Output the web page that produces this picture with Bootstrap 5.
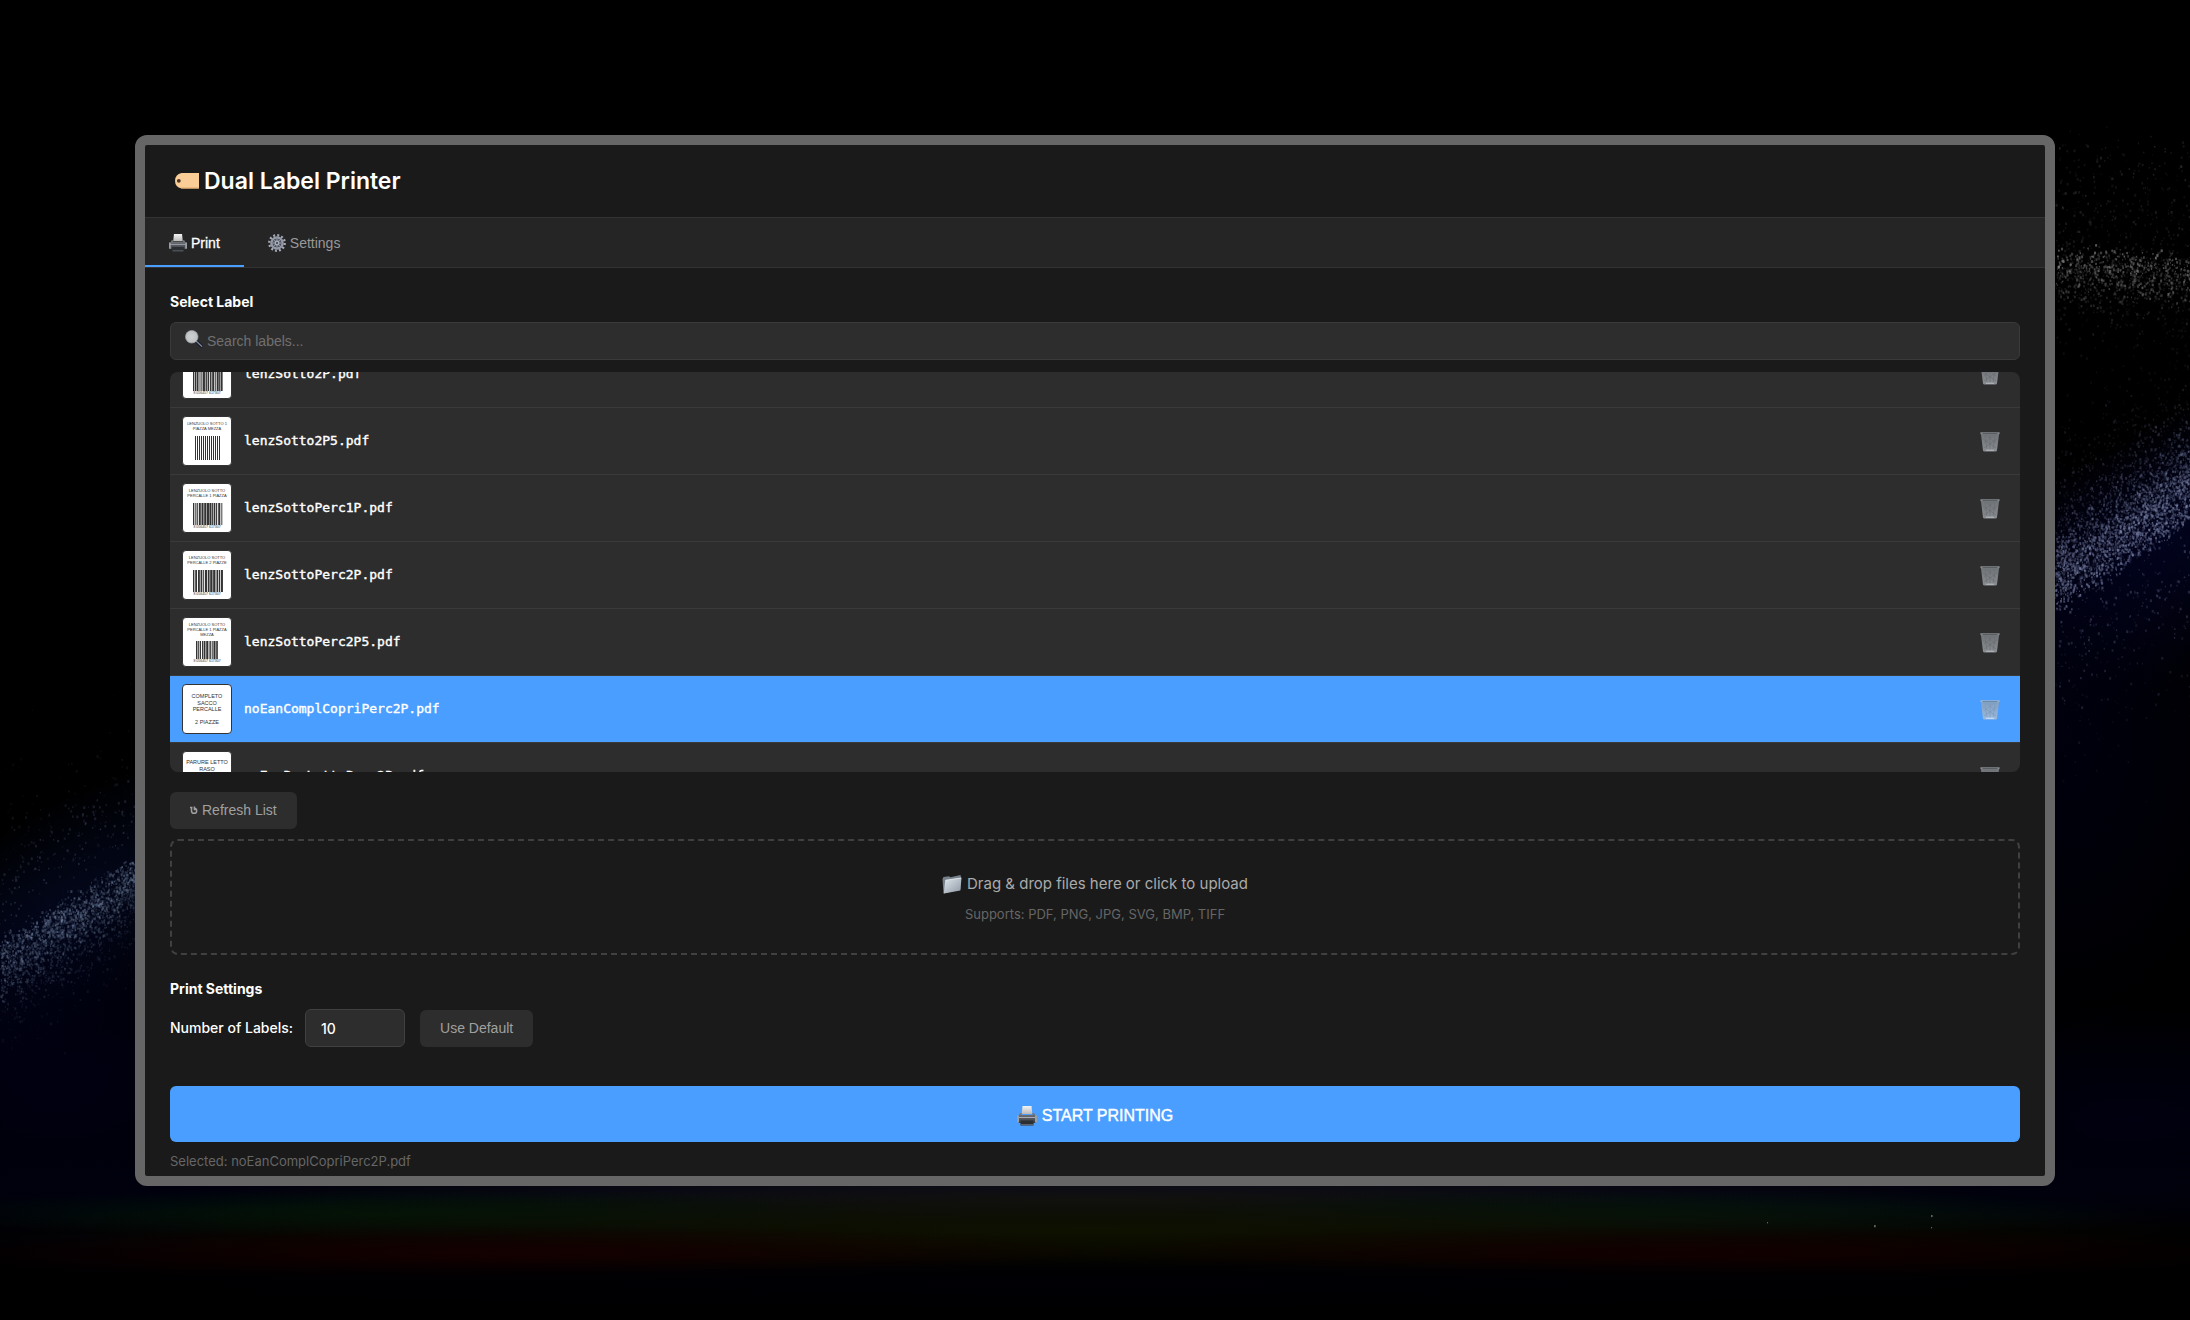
<!DOCTYPE html>
<html lang="en" data-bs-theme="dark">
<head>
<meta charset="utf-8">
<meta name="viewport" content="width=device-width, initial-scale=1">
<title>Dual Label Printer</title>
<link rel="stylesheet" href="https://cdn.jsdelivr.net/npm/bootstrap@5.3.0/dist/css/bootstrap.min.css">
<style>
  body { background: #000; font-family: Inter, "Open Sans", sans-serif; font-size: 14px; line-height: 20px; color: #fff; }
  .sky { position: fixed; inset: 0; width: 100%; height: 100%; z-index: -1; }
  .desktop { padding: 135px; }
  .app-window { border: 10px solid #666; border-radius: 12px; background: #1a1a1a; overflow: hidden; }
  .app-header { padding: 20px 30px; border-bottom: 1px solid #333; gap: 5px; }
  .app-header h1 { font-size: 23px; line-height: 32px; font-weight: 600; margin: 0; }
  .btn-soft, .btn-print, .tab-btn, .search-box input { font-family: "Liberation Sans", Arial, sans-serif; font-size: 14px; }
  .tab-strip { background: #252525; border-bottom: 1px solid #333; }
  .tab-btn { height: 49px; padding: 2px 24px 0; border: 0; border-bottom: 2px solid transparent; border-radius: 0; background: none; color: #999; gap: 4px; }
  .tab-btn.active { color: #fff; border-bottom-color: #4a9eff; -webkit-text-stroke: 0.3px #fff; }
  .app-body { padding: 24px 25px 6px; }
  .section-title { font-size: 14px; line-height: 20px; font-weight: 700; margin: 0 0 10px; }
  .search-box { height: 38px; padding: 0 14px; gap: 4px; background: #2d2d2d; border: 1px solid #3a3a3a; border-radius: 6px; margin-bottom: 12px; }
  .search-box input { background: none; border: 0; padding: 0; box-shadow: none !important; color: #fff; }
  .search-box input::placeholder { color: #707070; }
  .file-list { height: 400px; overflow-y: auto; scrollbar-width: none; background: #2d2d2d; border-radius: 8px; margin-bottom: 20px; }
  .file-list::-webkit-scrollbar { display: none; }
  .file-row { padding: 8px 12px; gap: 12px; border-bottom: 1px solid #3a3a3a; cursor: pointer; }
  .file-row.selected { background: #4a9eff; border-bottom-color: #3a3a3a; background-clip: padding-box; }
  .file-name { font-family: "DejaVu Sans Mono", monospace; font-size: 13px; -webkit-text-stroke: 0.4px #fff; }
  .thumb { width: 50px; height: 50px; border: 1px solid #333; border-radius: 4px; background: #fff; flex: none; }
  .row-del { width: 36px; height: 36px; padding: 0; border: 0; background: none; opacity: .9; }
  .selected .row-del { opacity: .7; filter: brightness(1.3); }
  .btn-soft { background: #2d2d2d; color: #a0a0a0; border: 0; border-radius: 6px; height: 37px; padding: 0 20px; gap: 4px; }
  .drop-zone { border: 2px dashed #404040; border-radius: 8px; padding: 30px; margin: 10px 0 24px; color: #aaa; cursor: pointer; }
  .drop-main { font-size: 15px; line-height: 26px; gap: 5px; }
  .drop-note { font-size: 13px; line-height: 18px; color: #666; margin-top: 8px; }
  .count-row { gap: 15px; margin-bottom: 39px; }
  .count-row label { font-weight: 500; margin-right: -3px; }
  .count-row input { width: 100px; height: 38px; padding: 0 15px; background: #2d2d2d; border: 1px solid #404040; border-radius: 6px; color: #fff; font-size: 14px; font-weight: 500; appearance: textfield; }
  .count-row input::-webkit-inner-spin-button { display: none; }
  .btn-print { height: 56px; padding: 3px 0 0; font-size: 16px; background: #4a9eff; color: #fff; border: 0; border-radius: 6px; gap: 5px; -webkit-text-stroke: 0.4px #fff; }
  .status-line { font-size: 13px; line-height: 18px; color: #666; margin: 10px 0 0; }
</style>
</head>
<body>
<canvas class="sky" id="sky" aria-hidden="true"></canvas>

<svg width="0" height="0" class="position-absolute" aria-hidden="true">
  <defs>
    <linearGradient id="gPaper" x2="0" y2="1"><stop stop-color="#f4f4f4"/><stop offset="1" stop-color="#b8b8b8"/></linearGradient>
    <linearGradient id="gBody" x2="0" y2="1"><stop stop-color="#7b8087"/><stop offset=".45" stop-color="#5a5e64"/><stop offset="1" stop-color="#3c4045"/></linearGradient>
    <linearGradient id="gFolder" x2="1" y2="1"><stop stop-color="#dfe6ec"/><stop offset="1" stop-color="#8e99a5"/></linearGradient>
    <linearGradient id="gBin" x2="0" y2="1"><stop stop-color="#777b80"/><stop offset="1" stop-color="#94989d"/></linearGradient>
    <radialGradient id="gLens"><stop stop-color="#cfd1d2"/><stop offset="1" stop-color="#bcc0c1"/></radialGradient>
    <symbol id="i-printer" viewBox="0 0 20 20">
      <path d="M5.500 0h9l.8 8H4.700z" fill="url(#gPaper)"/>
      <path d="M3 7h1.800l-.3 2h11l-.3-2H17l2 3.500V16a1 1 0 0 1-1 1H2a1 1 0 0 1-1-1v-5.500z" fill="url(#gBody)"/>
      <path d="M1.500 11h17v1h-17z" fill="#a9aeb4"/>
      <path d="M0 9.500h2v7H0zM18 9.500h2v7h-2z" fill="#9a9fa5"/>
      <path d="M3.500 14.500h13v5h-13z" fill="#2b2e32"/><path d="M4 18.200h12v1H4z" fill="#6d7278"/>
    </symbol>
    <symbol id="i-gear" viewBox="0 0 20 20">
      <circle cx="10" cy="10" r="8.600" fill="none" stroke="#a3a8b3" stroke-width="2.600" stroke-dasharray="2.200 2.303"/>
      <circle cx="10" cy="10" r="6.200" fill="none" stroke="#9298a5" stroke-width="2.800"/>
      <circle cx="10" cy="10" r="4.500" fill="#5a5f6b"/>
      <path d="M10 5v10M5 10h10M6.500 6.500l7 7M13.500 6.500l-7 7" stroke="#9298a5"/>
      <circle cx="10" cy="10" r="2.700" fill="#a9aebb"/><circle cx="10" cy="10" r="1.200" fill="#3b3f49"/>
    </symbol>
    <symbol id="i-lens" viewBox="0 0 20 20">
      <path d="M13 13l5 5" stroke="#151a26" stroke-width="3.600" stroke-linecap="round"/>
      <path d="M12 12l6.500 6" stroke="#7d879a" stroke-width="1.500" stroke-linecap="round"/>
      <circle cx="7.500" cy="7.500" r="7" fill="url(#gLens)" stroke="#9a9e9f" stroke-width=".8"/>
    </symbol>
    <symbol id="i-folder" viewBox="0 0 20 20">
      <path d="M.5 5l1-2 5.500-.8 1.500 1L18.500 1l.5 2.500-.500 12L1.500 19.500z" fill="#75808b"/>
      <path d="M3.200 6.200L19.500 3.800l-1.200 12.600L1.800 19.500z" fill="url(#gFolder)"/>
      <path d="M3.500 6.200L19.200 4" stroke="#f0f4f7" stroke-width=".7"/>
    </symbol>
    <symbol id="i-bin" viewBox="0 0 20 21">
      <path d="M.8 2h18.400l-2.200 17.300q-.2 1.200-1.500 1.200H4.500q-1.300 0-1.500-1.200z" fill="url(#gBin)"/>
      <path d="M5 4l2 15M10 4v15M15 4l-2 15M3 8l13 9M17 8L4 17M6 4l10 8M14 4L4 12" stroke="#6f7378" stroke-width=".6" fill="none"/>
      <path d="M.3 1.200h19.400l-.3 2H.6z" fill="#8f9499"/><path d="M2.500 2.600h15" stroke="#4c5055" stroke-width=".8"/>
      <path d="M6 19.200h8" stroke="#c3c6c9" stroke-width="1.200"/>
    </symbol>
  </defs>
</svg>

<div class="desktop">
<main class="app-window">
  <header class="app-header d-flex align-items-center">
    <svg width="24" height="18" viewBox="0 0 24 18" aria-hidden="true"><path d="M6.500 1H24v15.500H6.500Q0 15 0 8.800T6.500 1z" fill="#fbcd97"/><path d="M6.500 16.500H24v-1H5z" fill="#e0a96c"/><circle cx="3.800" cy="8.800" r="1.900" fill="#4a3524"/></svg>
    <h1>Dual Label Printer</h1>
  </header>

  <nav class="tab-strip d-flex" role="tablist">
    <button class="tab-btn active d-flex align-items-center" type="button" role="tab" aria-selected="true"><svg width="18" height="18" aria-hidden="true"><use href="#i-printer"/></svg>Print</button>
    <button class="tab-btn d-flex align-items-center" type="button" role="tab" aria-selected="false"><svg width="18" height="18" aria-hidden="true"><use href="#i-gear"/></svg>Settings</button>
  </nav>

  <div class="app-body">
    <section>
      <h2 class="section-title">Select Label</h2>
      <div class="search-box d-flex align-items-center">
        <svg width="18" height="18" class="flex-shrink-0 mb-1" aria-hidden="true"><use href="#i-lens"/></svg>
        <input class="form-control" type="search" placeholder="Search labels..." aria-label="Search labels">
      </div>
      <div class="file-list" id="fileList" role="listbox" aria-label="Labels"></div>
      <button class="btn-soft btn d-inline-flex align-items-center" type="button">
        <svg width="8" height="9" viewBox="0 0 8 9" fill="none" stroke="currentColor" stroke-width="1.500" aria-hidden="true"><path d="M1.500 1.500v3.200a2.600 2.600 0 0 0 5.200 0Q6.700 3 5 2.200M0 1.500h2.500M4.400.600v2.800h2.800"/></svg>Refresh List</button>
      <div class="drop-zone text-center" role="button" tabindex="0">
        <div class="drop-main d-flex align-items-center justify-content-center"><svg width="20" height="20" aria-hidden="true"><use href="#i-folder"/></svg>Drag &amp; drop files here or click to upload</div>
        <div class="drop-note">Supports: PDF, PNG, JPG, SVG, BMP, TIFF</div>
      </div>
    </section>

    <section>
      <h2 class="section-title">Print Settings</h2>
      <div class="count-row d-flex align-items-center">
        <label for="count">Number of Labels:</label>
        <input id="count" type="number" value="10" min="1">
        <button class="btn btn-soft" type="button">Use Default</button>
      </div>
    </section>

    <button class="btn btn-print w-100 d-flex align-items-center justify-content-center" type="button"><svg width="20" height="20" aria-hidden="true"><use href="#i-printer"/></svg>START PRINTING</button>
    <p class="status-line">Selected: noEanComplCopriPerc2P.pdf</p>
  </div>
</main>
</div>

<script src="https://cdn.jsdelivr.net/npm/bootstrap@5.3.0/dist/js/bootstrap.bundle.min.js"></script>
<script>
  // Small deterministic generator so that stars and bars stay the same on every load
  function seeded(s) { return function () { s = (s * 1664525 + 1013904223) >>> 0; return s / 4294967296; }; }

  // bars: [x, y, width, height] of the barcode; size: text size
  const labels = [
    { name: 'lenzSotto2P.pdf', lines: ['LENZUOLO SOTTO', '2 PIAZZE'], size: 4, bars: [10, 19, 29, 22] },
    { name: 'lenzSotto2P5.pdf', lines: ['LENZUOLO SOTTO 1', 'PIAZZA MEZZA'], size: 4, bars: [12, 19, 25, 24], thin: true },
    { name: 'lenzSottoPerc1P.pdf', lines: ['LENZUOLO SOTTO', 'PERCALLE 1 PIAZZA'], size: 4, bars: [10, 19, 29, 22] },
    { name: 'lenzSottoPerc2P.pdf', lines: ['LENZUOLO SOTTO', 'PERCALLE 2 PIAZZE'], size: 4, bars: [10, 19, 29, 22] },
    { name: 'lenzSottoPerc2P5.pdf', lines: ['LENZUOLO SOTTO', 'PERCALLE 1 PIAZZA', 'MEZZA'], size: 4, bars: [13, 23, 22, 18] },
    { name: 'noEanComplCopriPerc2P.pdf', lines: ['COMPLETO', 'SACCO', 'PERCALLE', '', '2 PIAZZE'], size: 5, selected: true },
    { name: 'noEanParLettoPerc2P.pdf', lines: ['PARURE LETTO', 'RASO', '2 PIAZZE'], size: 5 }
  ];
  function thumb(l, i) {
    const big = l.size === 5, step = big ? 6.500 : 5, top = big && l.selected ? 13 : big ? 12 : 8;
    let out = l.lines.map((t, n) => `<text x="24" y="${top + n * step}">${t}</text>`).join('');
    if (l.bars) {
      const [x, y, w, h] = l.bars, rnd = seeded(i * 97 + 11);
      for (let p = x; p < x + w;) {
        const bw = l.thin ? 1 : 0.8 + rnd() * 1.600;
        out += `<rect x="${p}" y="${y}" width="${bw}" height="${h}"/>`;
        p += bw + (l.thin ? 1 : 0.4 + rnd() * 0.7);
      }
      if (!l.thin) out += `<text x="24" y="${y + h + 3}" font-size="3.500">8 056457 617307</text>`;
    }
    return `<svg class="thumb" viewBox="0 0 48 48" font-family="Liberation Sans" font-size="${big ? 5.500 : 4}" text-anchor="middle" fill="#333" aria-hidden="true">${out}</svg>`;
  }
  const list = document.getElementById('fileList');
  list.innerHTML = labels.map((l, i) => `<div class="file-row d-flex align-items-center${l.selected ? ' selected' : ''}" role="option" aria-selected="${!!l.selected}">${thumb(l, i)}<span class="file-name flex-grow-1">${l.name}</span><button class="row-del" type="button" aria-label="Delete ${l.name}"><svg width="20" height="21" aria-hidden="true"><use href="#i-bin"/></svg></button></div>`).join('');
  list.scrollTop = 31;

  // Night sky: soft glows, two bands of stars and a faint aurora near the bottom
  function paintSky() {
    const c = document.getElementById('sky'), g = c.getContext('2d'), rnd = seeded(7);
    c.width = innerWidth; c.height = innerHeight;
    g.scale(innerWidth / 2190, innerHeight / 1320);
    function glow(x, y, rx, ry, col, rot) {
      g.save(); g.translate(x, y); g.rotate(rot || 0); g.scale(rx, ry);
      const r = g.createRadialGradient(0, 0, 0, 0, 0, 1);
      r.addColorStop(0, `rgba(${col},1)`); r.addColorStop(.4, `rgba(${col},.65)`); r.addColorStop(1, `rgba(${col},0)`);
      g.fillStyle = r; g.fillRect(-1, -1, 2, 2); g.restore();
    }
    glow(2130, 570, 330, 115, '2,4,34', -.6);
    glow(2060, 740, 200, 300, '0,0,14');
    glow(50, 930, 280, 110, '3,8,30', -.58);
    glow(60, 1080, 330, 200, '0,0,18');
    glow(2130, 1120, 330, 120, '0,0,16');
    glow(1095, 1190, 1500, 55, '0,2,22');
    glow(1095, 1200, 900, 36, '18,17,20');
    glow(420, 1213, 520, 24, '0,20,8');
    glow(1640, 1213, 520, 24, '0,18,14');
    glow(1095, 1230, 1150, 42, '15,17,0');
    glow(520, 1253, 620, 28, '20,0,0');
    glow(1680, 1253, 620, 28, '18,0,0');
    glow(1095, 1285, 1300, 30, '0,0,5');
    function star(x, y, a, col) { g.fillStyle = `rgba(${col},${a})`; const s = .9 + rnd() * 1.300; g.fillRect(x, y, s, s * 1.300); }
    // edge(x) is the sharp side of a band; dir says to which side it fades out
    function band(n, x0, x1, edge, dir, depth, col, alpha) {
      for (let i = 0; i < n; i++) {
        const x = x0 + rnd() * (x1 - x0), t = Math.abs(rnd() + rnd() * .5 - .5) * rnd() + rnd() * .25;
        star(x, edge(x) + dir * t * depth + (rnd() - .5) * 16, (.1 + rnd() * .9) * alpha * Math.max(.25, 1 - t), col);
      }
    }
    band(1000, 2055, 2190, x => 246 + (x - 2055) * .07, 1, 95, '150,150,155', .62);
    band(3900, 2055, 2190, x => 616 - (x - 2055) * .68, -1, 190, '135,145,185', .58);
    band(2700, 0, 135, x => 938 - x * .62, 1, 130, '125,145,175', .45);
    band(600, 2055, 2190, () => 130, 1, 430, '120,120,130', .3);
    band(300, 2055, 2190, x => 610 - (x - 2055) * .6, 1, 260, '120,130,170', .4);
    band(260, 0, 135, x => 930 - x * .62, -1, 200, '110,125,160', .35);
    [[1767, 1222], [1874, 1225], [1931, 1215], [1931, 1227]].forEach(p => star(p[0], p[1], .6, '150,160,150'));
  }
  paintSky();
  addEventListener('resize', paintSky);
</script>
</body>
</html>
